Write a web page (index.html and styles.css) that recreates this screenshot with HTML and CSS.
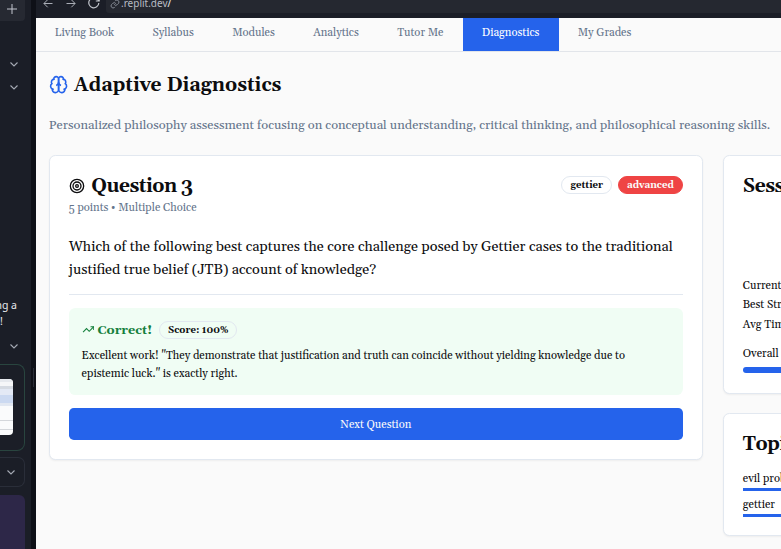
FILE: index.html
```
<!DOCTYPE html>
<html lang="en">
<head>
<meta charset="utf-8">
<title>Adaptive Diagnostics</title>
<link rel="stylesheet" href="styles.css">
</head>
<body>
<div class="app">
  <aside class="side">
    <div class="new-tab"><svg class="plus" viewBox="0 0 10 10"><path d="M5 0v10M0 5h10"/></svg></div>
    <svg class="chev chev-a" viewBox="0 0 8 5"><path d="M.5 .5 4 4 7.5 .5"/></svg>
    <svg class="chev chev-b" viewBox="0 0 8 5"><path d="M.5 .5 4 4 7.5 .5"/></svg>
    <div class="chat"><p>ng a</p><p class="bang">!</p></div>
    <svg class="chev chev-c" viewBox="0 0 8 5"><path d="M.5 .5 4 4 7.5 .5"/></svg>
    <div class="preview">
      <div class="thumb"><i class="t-head"></i><i class="t-blue"></i><i class="t-line"></i><i class="t-line t-last"></i></div>
    </div>
    <div class="collapsed"><svg class="chev" viewBox="0 0 8 5"><path d="M.5 .5 4 4 7.5 .5"/></svg></div>
    <div class="purple"></div>
  </aside>
  <div class="divider"><i></i></div>
  <div class="view">
    <header class="chrome">
      <svg class="arrow" viewBox="0 0 10 10"><path d="M9.5 4.5H1M4.7 .7.9 4.5l3.8 3.8"/></svg>
      <svg class="arrow" viewBox="0 0 10 10"><path d="M.5 4.5H9M5.3 .7l3.8 3.8-3.8 3.8"/></svg>
      <svg class="reload" viewBox="0 0 12 12"><path d="M10.8 6A5 5 0 1 1 9.3 2.2l1.7 1.6M11.2 .6v3.4H7.8"/></svg>
      <div class="url">
        <svg class="link" viewBox="0 0 24 24"><path d="M10 13a5 5 0 0 0 7.5.5l3-3a5 5 0 0 0-7-7l-1.800 1.700M14 11a5 5 0 0 0-7.500-.5l-3 3a5 5 0 0 0 7 7l1.700-1.700"/></svg>
        <span>.replit.dev<b>/</b></span>
      </div>
    </header>
    <nav class="nav">
      <a>Living Book</a><a>Syllabus</a><a>Modules</a><a>Analytics</a><a>Tutor Me</a><a class="active">Diagnostics</a><a>My Grades</a>
    </nav>
    <main class="main">
      <h1><svg class="brain" viewBox="0 0 24 24"><path d="M12 5a3 3 0 1 0-5.997.125 4 4 0 0 0-2.526 5.770 4 4 0 0 0 .556 6.588A4 4 0 1 0 12 18Z"/><path d="M12 5a3 3 0 1 1 5.997.125 4 4 0 0 1 2.526 5.770 4 4 0 0 1-.556 6.588A4 4 0 1 1 12 18Z"/><path d="M15 13a4.500 4.500 0 0 1-3-4 4.500 4.500 0 0 1-3 4"/><path d="M17.599 6.500a3 3 0 0 0 .399-1.375M6.003 5.125A3 3 0 0 0 6.401 6.500M3.477 10.896a4 4 0 0 1 .585-.396M19.938 10.500a4 4 0 0 1 .585.396M6 18a4 4 0 0 1-1.967-.516M19.967 17.484A4 4 0 0 1 18 18"/></svg><span>Adaptive Diagnostics</span></h1>
      <p class="lead">Personalized philosophy assessment focusing on conceptual understanding, critical thinking, and philosophical reasoning skills.</p>
      <div class="columns">
        <section class="card question">
          <div class="q-head">
            <div>
              <h2><svg class="target" viewBox="0 0 24 24"><circle cx="12" cy="12" r="10"/><circle cx="12" cy="12" r="6"/><circle cx="12" cy="12" r="2"/></svg>Question 3</h2>
              <p class="meta">5 points • Multiple Choice</p>
            </div>
            <div class="badges"><span class="badge">gettier</span><span class="badge red">advanced</span></div>
          </div>
          <p class="prompt">Which of the following best captures the core challenge posed by Gettier cases to the traditional justified true belief (JTB) account of knowledge?</p>
          <hr>
          <div class="feedback">
            <div class="f-head"><svg class="trend" viewBox="0 0 24 24"><path d="M22 7 13.500 15.500l-5-5L2 17"/><path d="M16 7h6v6"/></svg><strong>Correct!</strong><span class="badge">Score: 100%</span></div>
            <p>Excellent work! "They demonstrate that justification and truth can coincide without yielding knowledge due to epistemic luck." is exactly right.</p>
          </div>
          <button>Next Question</button>
        </section>
        <div class="stats">
          <section class="card session">
            <h2>Session Progress</h2>
            <div class="rows"><p>Current Streak</p><p>Best Streak</p><p>Avg Time</p></div>
            <p class="overall">Overall Mastery</p>
            <div class="bar"></div>
          </section>
          <section class="card topics">
            <h2>Topic Mastery</h2>
            <p>evil problem</p><div class="bar thin"></div>
            <p>gettier</p><div class="bar thin"></div>
          </section>
        </div>
      </div>
    </main>
  </div>
</div>
</body>
</html>
```

FILE: styles.css
```
* { box-sizing: border-box; }
body { margin: 0; overflow: hidden; }
h1, h2, p { margin: 0; }
svg { display: block; fill: none; stroke: currentColor; flex: none; }
.app { display: flex; width: 781px; height: 549px; overflow: hidden; }

.side { width: 31px; flex: none; background: #1b1e27; color: #a6abb5; display: flex; flex-direction: column; overflow: hidden; }
.new-tab { width: 25px; height: 21px; flex: none; background: #262932; border-bottom-right-radius: 4px; padding: 4px 0 0 7px; color: #c3c7cf; }
.plus { width: 10px; height: 10px; }
.chev { width: 8px; height: 5px; stroke-width: 1.1; }
.chev-a { margin: 41px 0 0 10px; }
.chev-b { margin: 18px 0 0 10px; }
.chev-c { margin: 15px 0 0 10px; }
.chat { margin-top: 207px; height: 32px; font: 10.500px/16px "Noto Sans", sans-serif; color: #e7e9ed; width: 17px; white-space: nowrap; display: flex; flex-direction: column; align-items: flex-end; }
.chat .bang { align-self: flex-start; }
.preview { width: 25px; height: 87px; margin-top: 15px; flex: none; border: 1px solid #29453f; border-left: 0; border-radius: 0 8px 8px 0; padding-top: 14px; }
.thumb { width: 13px; height: 56px; background: #fafbfc; border-radius: 0 4px 4px 0; overflow: hidden; }
.thumb i { display: block; }
.t-head { height: 10px; background: linear-gradient(#e6e9ee 3px, #f5f6f8 3px 7px, #d5dae2 7px); }
.t-blue { height: 17px; background: linear-gradient(#e3e9f5 6px, #cbd9f1 6px 14px, #e2e8f2 14px); }
.t-line { height: 1px; margin-top: 14px; background: #d4d7db; }
.thumb .t-last { margin-top: 8px; }
.collapsed { width: 25px; height: 30px; margin-top: 6px; flex: none; border: 1px solid #2a2e39; border-left: 0; border-radius: 0 7px 7px 0; padding: 12px 0 0 6.500px; }
.purple { width: 25px; height: 60px; margin-top: 8px; flex: none; background: #2d2748; border-radius: 0 6px 0 0; }
.divider { width: 5px; flex: none; background: #0e1017; padding: 368px 0 0 2px; }
.divider i { display: block; width: 1px; height: 19px; background: #2b2e38; }

.view { width: 745px; flex: none; height: 549px; background: #fafafa; overflow: hidden; }
.chrome { height: 18px; background: #1b1e27; display: flex; color: #a9adb6; overflow: hidden; }
.arrow { width: 10px; height: 10px; margin: -1px 0 0 7px; }
.arrow + .arrow { margin-left: 13px; }
.reload { width: 12px; height: 12px; margin: -3px 6px 0 12px; stroke-width: 1.2; color: #c1c5cc; }
.url { flex: 1; height: 13px; background: #252830; border-bottom-left-radius: 3px; padding-left: 4px; display: flex; }
.link { width: 10px; height: 10px; stroke-width: 2.4; color: #858a94; margin-top: -1px; }
.url span { font: 10px/15px "Noto Sans", sans-serif; color: #b7bbc3; margin: -4px 0 0 1px; }
.url b { font-weight: 400; color: #f0f1f3; }

.nav, .main { font-family: Gelasio, Georgia, "Liberation Serif", serif; font-variant-numeric: oldstyle-nums; }
.nav { height: 33.500px; display: flex; border-bottom: 1px solid #e2e5ea; }
.nav a { font-size: 11.200px; line-height: 16px; padding: 7.400px 19.200px 0; color: #64748b; white-space: nowrap; }
.nav a:first-child { padding-left: 18.800px; }
.nav .active { background: #2563eb; color: #fff; }
.main { padding: 0 0 0 12.800px; color: #0c0c0e; }
h1 { display: flex; align-items: center; gap: 6px; height: 29px; margin-top: 19px; font-size: 19.200px; line-height: 25.600px; }
h1 span { padding-top: 2px; }
.brain { width: 19.200px; height: 19.200px; stroke-width: 2; color: #2563eb; }
.lead { margin-top: 15px; height: 21px; font-size: 12.800px; line-height: 20px; color: #64748b; white-space: nowrap; }
.columns { display: flex; gap: 20px; align-items: flex-start; margin-top: 19.500px; }
.card { background: #fff; border: 1px solid #e2e8f0; border-radius: 6.400px; box-shadow: 0 1px 2px rgba(0, 0, 0, .05); padding: 0 19px; }
.card h2 { font-size: 19.200px; line-height: 20px; letter-spacing: -.025em; display: flex; align-items: center; }
.question { width: 654px; height: 305px; flex: none; }
.q-head { display: flex; justify-content: space-between; padding-top: 21px; }
.target { width: 16px; height: 16px; margin: -3px 6.400px 0 0; stroke-width: 2; }
.meta { margin-top: 3px; font-size: 11.200px; line-height: 16px; color: #64748b; }
.badges { display: flex; gap: 6px; align-items: flex-start; margin-top: -1px; }
.badge { display: inline-flex; align-items: center; height: 18px; border: 1px solid #e2e8f0; border-radius: 9px; padding: 0 8px; font-size: 9.600px; font-weight: 700; color: #0c0c0e; white-space: nowrap; }
.badge.red { background: #ef4444; border-color: #ef4444; color: #fafafa; }
.prompt { margin-top: 20px; font-size: 14.400px; line-height: 23.400px; }
hr { border: 0; height: 1px; background: #e2e8f0; margin: 11px 0 13px; }
.feedback { height: 87px; background: #f0fdf4; border-radius: 6.400px; padding: 12.800px; }
.f-head { display: flex; align-items: center; height: 18px; }
.trend { width: 12.800px; height: 12.800px; stroke-width: 2; color: #15803d; margin-right: 3px; }
.f-head strong { font-size: 12.800px; color: #15803d; margin-right: 7px; }
.feedback p { font-size: 11.200px; line-height: 18.200px; margin-top: 8.400px; }
button { display: block; width: 100%; height: 32px; margin-top: 13px; padding: 1px 0 0; border: 0; border-radius: 4.800px; background: #2563eb; color: #fafafa; font: 11.200px/32px Gelasio, Georgia, "Liberation Serif", serif; }
.stats { width: 205px; flex: none; }
.stats p { font-size: 11.200px; line-height: 19.400px; white-space: nowrap; }
.session { height: 239px; padding-top: 21px; }
.rows { margin-top: 80px; }
.overall { margin-top: 10px; }
.bar { height: 6.400px; border-radius: 3.200px; background: #2563eb; margin-top: 2px; }
.topics { height: 123px; margin-top: 19px; padding-top: 21px; }
.topics p { margin-top: 16px; line-height: 17px; }
.topics .thin { height: 3px; margin-top: 0; border-radius: 0; }
.topics .thin + p { margin-top: 6px; }
```
